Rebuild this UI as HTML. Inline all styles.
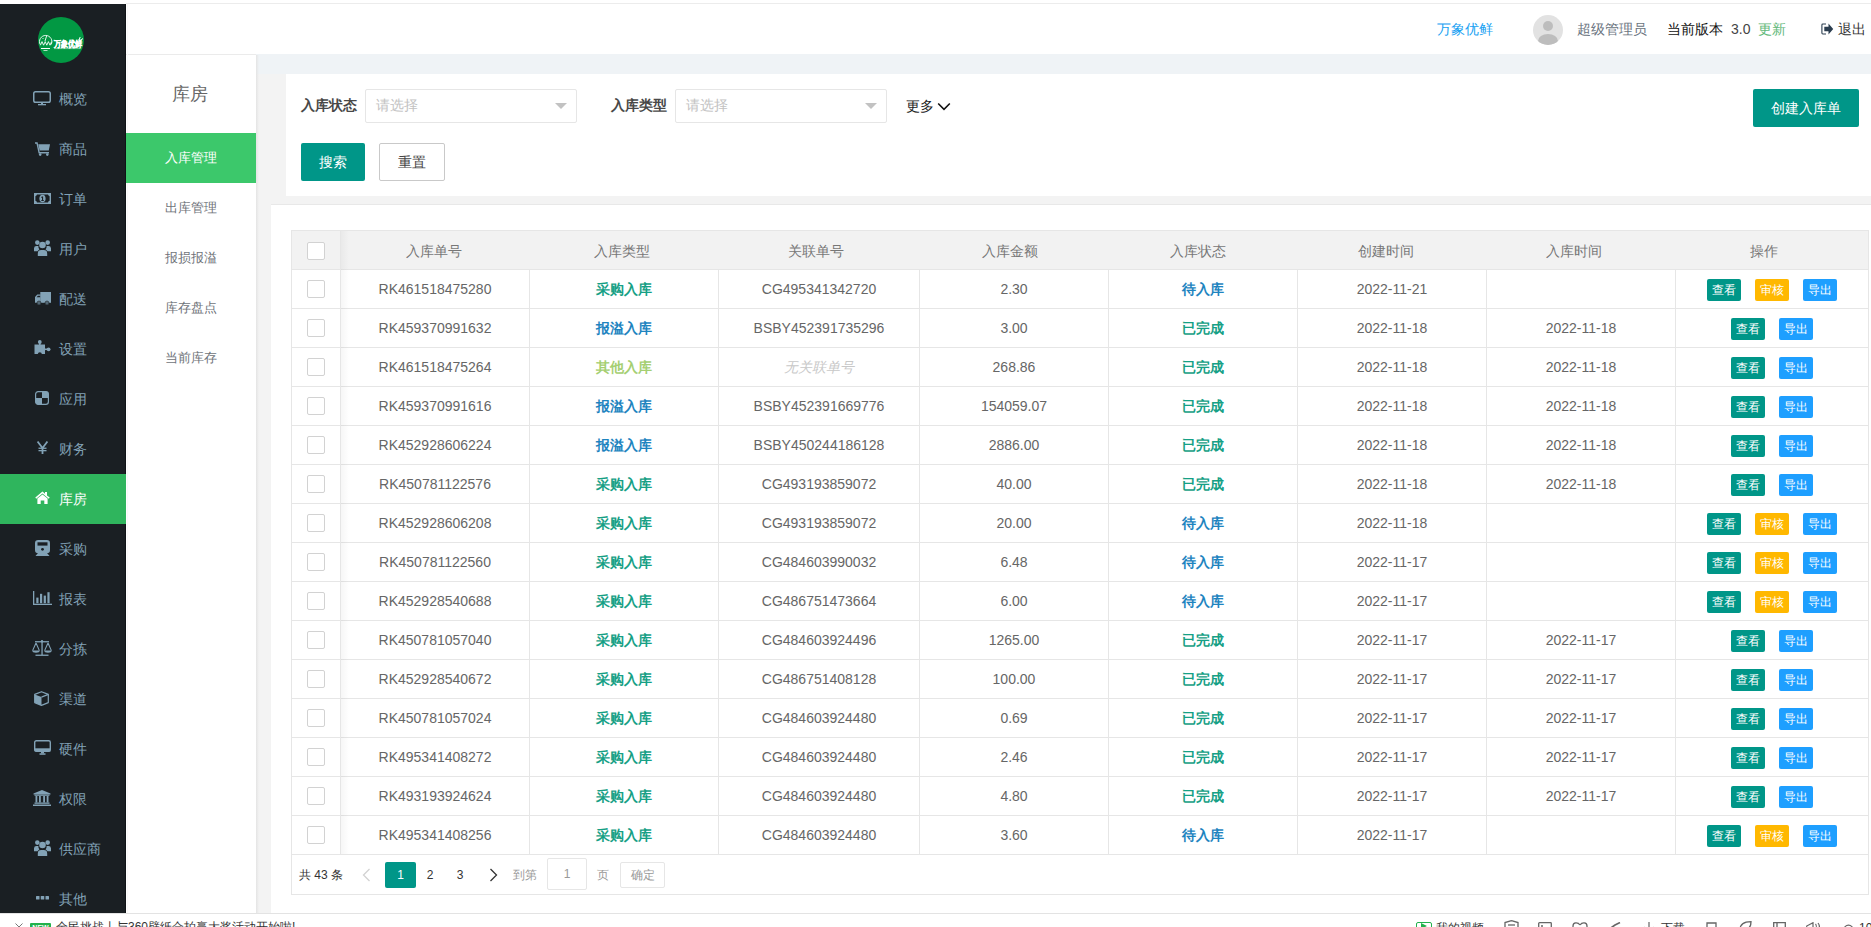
<!DOCTYPE html>
<html><head><meta charset="utf-8">
<style>
*{box-sizing:border-box;margin:0;padding:0}
html,body{width:1871px;height:927px;overflow:hidden;background:#fff;font-family:"Liberation Sans",sans-serif;font-size:14px;color:#666}
.a{position:absolute}
.c{position:absolute;display:flex;align-items:center;justify-content:center;white-space:nowrap}
.hl{position:absolute;height:1px;background:#e6e6e6}
.vl{position:absolute;width:1px;background:#e6e6e6}
.mi{position:absolute;left:0;width:126px;height:50px;color:#7f99aa;font-size:14px}
.mi .ic{position:absolute;left:42px;top:25px;transform:translate(-50%,-50%);display:flex;align-items:center;justify-content:center;line-height:1}
.mi .tx{position:absolute;left:59px;top:0;line-height:50px}
.sm{position:absolute;left:126px;width:130px;height:50px;line-height:50px;text-align:center;font-size:13px;color:#6f747a}
.cb{position:absolute;width:18px;height:18px;border:1px solid #d2d2d2;border-radius:2px;background:#fff}
.btn{position:absolute;height:22px;width:34px;line-height:22px;font-size:12px;color:#fff;text-align:center;border-radius:2px}
</style></head><body>

<div class="a" style="left:126px;top:3px;width:1745px;height:1px;background:#ececec"></div>
<div class="a" style="left:0;top:4px;width:126px;height:909px;background:#1a1f23"></div>
<div class="a" style="left:125px;top:4px;width:1px;height:909px;background:#0f1316"></div>
<div class="a" style="left:38px;top:17px;width:46px;height:46px;border-radius:50%;background:#029843;overflow:hidden">
<svg width="46" height="46" viewBox="0 0 46 46" style="position:absolute;left:0;top:0">
<path d="M2.2 27.5 A6.2 6.2 0 1 1 13.2 27.5" fill="none" stroke="#fff" stroke-width="0.9"/>
<path d="M2.4 28.2 l1.6-3.6 1.6 3.6 1.6-3.6 1.6 3.6 1.6-3.6 1.6 3.6 1.6-3.6" fill="none" stroke="#fff" stroke-width="0.9"/>
<path d="M8.6 19 l-1.6 5" stroke="#fff" stroke-width="0.9"/>
<rect x="4.4" y="21.3" width="1.2" height="0.7" fill="#fff"/>
<rect x="3" y="31" width="9" height="1" fill="#fff"/><rect x="5.5" y="33.2" width="4" height="0.7" fill="#fff"/>
<text x="16" y="29.5" font-size="8.5" font-weight="bold" fill="#fff" stroke="#fff" stroke-width="0.35" font-family="Liberation Sans, sans-serif" textLength="28" lengthAdjust="spacingAndGlyphs">万象优鲜</text>
<path d="M41 23 l1.2-3 M42.5 23.5 l2.5-2" stroke="#fff" stroke-width="1"/>
<rect x="16" y="31.2" width="26" height="0.9" fill="#fff" opacity="0.5"/>
</svg></div>
<div class="a" style="left:59px;top:74px;line-height:50px;font-size:14px;color:#82a2b6">概览</div>
<svg class="a" style="left:33px;top:91px" width="18" height="15" viewBox="0 0 18 15"><rect x="0.75" y="0.75" width="16.5" height="10.5" rx="1.8" fill="none" stroke="#82a2b6" stroke-width="1.5"/><rect x="8" y="11.5" width="2" height="2" fill="#82a2b6"/><rect x="5" y="13" width="8" height="1.3" fill="#82a2b6"/></svg>
<div class="a" style="left:59px;top:124px;line-height:50px;font-size:14px;color:#82a2b6">商品</div>
<svg class="a" style="left:35px;top:142px" width="15" height="14" viewBox="0 0 15 14"><path d="M0 0.3h2.6l2.1 9.8h9.3v1.4H3.6L1.5 1.7H0z" fill="#82a2b6"/><path d="M3.3 2.3H15l-1.2 6.3H4.6z" fill="#82a2b6"/><circle cx="5.2" cy="12.6" r="1.3" fill="#82a2b6"/><circle cx="12.3" cy="12.6" r="1.3" fill="#82a2b6"/></svg>
<div class="a" style="left:59px;top:174px;line-height:50px;font-size:14px;color:#82a2b6">订单</div>
<svg class="a" style="left:34px;top:193px" width="17" height="11" viewBox="0 0 17 11"><rect x="0" y="0" width="17" height="11" fill="#82a2b6"/><path d="M3 1.6h11a2 2 0 0 0 1.6 1.6v4.6a2 2 0 0 0-1.6 1.6H3a2 2 0 0 0-1.6-1.6V3.2A2 2 0 0 0 3 1.6z" fill="#1a1f23"/><ellipse cx="8.5" cy="5.5" rx="3.1" ry="3.8" fill="#82a2b6"/><path d="M8 3.4h1.1v3.9h0.9v0.8H7.1V7.3h0.9V4.5l-0.8 0.4V4z" fill="#1a1f23"/></svg>
<div class="a" style="left:59px;top:224px;line-height:50px;font-size:14px;color:#82a2b6">用户</div>
<svg class="a" style="left:34px;top:240px" width="17" height="16" viewBox="0 0 17 16"><circle cx="3.3" cy="2.6" r="2.3" fill="#82a2b6"/><circle cx="13.7" cy="2.6" r="2.3" fill="#82a2b6"/><circle cx="8.5" cy="5" r="3.3" fill="#82a2b6"/><path d="M0 8.2a2.4 2.4 0 0 1 2.4-2.2h2a4.2 4.2 0 0 0 1 3.4 4 4 0 0 0-1.9 1.8H0z" fill="#82a2b6"/><path d="M17 8.2a2.4 2.4 0 0 0-2.4-2.2h-2a4.2 4.2 0 0 1-1 3.4 4 4 0 0 1 1.9 1.8H17z" fill="#82a2b6"/><path d="M3.8 16v-2.6a3.4 3.4 0 0 1 3.4-3.3h2.6a3.4 3.4 0 0 1 3.4 3.3V16z" fill="#82a2b6"/></svg>
<div class="a" style="left:59px;top:274px;line-height:50px;font-size:14px;color:#82a2b6">配送</div>
<svg class="a" style="left:35px;top:292px" width="16" height="13" viewBox="0 0 16 13"><rect x="5.3" y="0" width="10.7" height="10.8" fill="#82a2b6"/><path d="M0 10.8V5l2.3-2.6h3.3v8.4z" fill="#82a2b6"/><path d="M1.6 5.2l1.3-1.4h2.2v1.4z" fill="#1a1f23"/><circle cx="4" cy="11" r="1.9" fill="#82a2b6" stroke="#1a1f23" stroke-width="0.8"/><circle cx="12" cy="11" r="1.9" fill="#82a2b6" stroke="#1a1f23" stroke-width="0.8"/><circle cx="4" cy="11" r="0.8" fill="#1a1f23"/><circle cx="12" cy="11" r="0.8" fill="#1a1f23"/></svg>
<div class="a" style="left:59px;top:324px;line-height:50px;font-size:14px;color:#82a2b6">设置</div>
<svg class="a" style="left:34px;top:340px" width="17" height="14" viewBox="0 0 17 14"><rect x="0.5" y="4.5" width="10.5" height="9.5" fill="#82a2b6"/><circle cx="5.8" cy="2" r="1.9" fill="#82a2b6"/><rect x="5" y="2.5" width="1.6" height="2.5" fill="#82a2b6"/><circle cx="14.6" cy="9.3" r="1.9" fill="#82a2b6"/><rect x="10.5" y="8.5" width="3" height="1.6" fill="#82a2b6"/><circle cx="5.8" cy="14.2" r="2" fill="#1a1f23"/></svg>
<div class="a" style="left:59px;top:374px;line-height:50px;font-size:14px;color:#82a2b6">应用</div>
<svg class="a" style="left:35px;top:391px" width="14" height="14" viewBox="0 0 14 14"><rect x="0.6" y="0.6" width="12.8" height="12.8" rx="2.6" fill="none" stroke="#82a2b6" stroke-width="1.2"/><path d="M7 0.6h4a2.4 2.4 0 0 1 2.4 2.4V7H7z" fill="#82a2b6"/><path d="M7 13.4H3A2.4 2.4 0 0 1 0.6 11V7H7z" fill="#82a2b6"/></svg>
<div class="a" style="left:59px;top:424px;line-height:50px;font-size:14px;color:#82a2b6">财务</div>
<svg class="a" style="left:37px;top:441px" width="11" height="13" viewBox="0 0 11 13"><path d="M0.5 0.5L5.5 7 10.5 0.5" fill="none" stroke="#82a2b6" stroke-width="1.8"/><rect x="4.6" y="6" width="1.8" height="7" fill="#82a2b6"/><rect x="1.5" y="6.6" width="8" height="1.3" fill="#82a2b6"/><rect x="1.5" y="9" width="8" height="1.3" fill="#82a2b6"/></svg>
<div class="a" style="left:0;top:474px;width:126px;height:50px;background:#2fb55d"></div>
<div class="a" style="left:59px;top:474px;line-height:50px;font-size:14px;color:#fff">库房</div>
<svg class="a" style="left:35px;top:491px" width="15" height="13" viewBox="0 0 15 13"><path d="M7.5 0.6L0.3 6.6l0.9 1.1L7.5 2.4l6.3 5.3 0.9-1.1L12 4.4V1H10v1.7z" fill="#fff"/><path d="M2.4 7.6L7.5 3.4l5.1 4.2V13H9.3V9.4H5.7V13H2.4z" fill="#fff"/></svg>
<div class="a" style="left:59px;top:524px;line-height:50px;font-size:14px;color:#82a2b6">采购</div>
<svg class="a" style="left:35px;top:540px" width="15" height="16" viewBox="0 0 15 16"><rect x="0" y="0" width="15" height="13.2" rx="3.2" fill="#82a2b6"/><rect x="2.5" y="2.3" width="10" height="3.3" fill="#1a1f23"/><circle cx="7.5" cy="9.3" r="1.4" fill="#1a1f23"/><path d="M3 13h9l2.5 3H0.5z" fill="#82a2b6"/></svg>
<div class="a" style="left:59px;top:574px;line-height:50px;font-size:14px;color:#82a2b6">报表</div>
<svg class="a" style="left:33px;top:591px" width="19" height="14" viewBox="0 0 19 14"><rect x="0" y="0" width="1.3" height="14" fill="#82a2b6"/><rect x="0" y="12.7" width="19" height="1.3" fill="#82a2b6"/><rect x="3.3" y="6.6" width="2.2" height="5.6" fill="#82a2b6"/><rect x="7" y="2.8" width="2.2" height="9.4" fill="#82a2b6"/><rect x="10.7" y="4.6" width="2.2" height="7.6" fill="#82a2b6"/><rect x="14.4" y="1.2" width="2.2" height="11" fill="#82a2b6"/></svg>
<div class="a" style="left:59px;top:624px;line-height:50px;font-size:14px;color:#82a2b6">分拣</div>
<svg class="a" style="left:32px;top:640px" width="20" height="16" viewBox="0 0 20 16"><rect x="3" y="1.1" width="14" height="1.3" fill="#82a2b6"/><circle cx="10" cy="1.3" r="1.2" fill="#82a2b6"/><rect x="9.4" y="1" width="1.3" height="14" fill="#82a2b6"/><rect x="3.5" y="14.6" width="13" height="1.3" fill="#82a2b6"/><path d="M4 3L0.6 10.6M4 3l3.4 7.6M16 3l-3.4 7.6M16 3l3.4 7.6" stroke="#82a2b6" stroke-width="1.1" fill="none"/><path d="M0.3 10.6h7.4a3.7 2.2 0 0 1-7.4 0zM12.3 10.6h7.4a3.7 2.2 0 0 1-7.4 0z" fill="#82a2b6"/></svg>
<div class="a" style="left:59px;top:674px;line-height:50px;font-size:14px;color:#82a2b6">渠道</div>
<svg class="a" style="left:34px;top:691px" width="15" height="15" viewBox="0 0 15 15"><path d="M7.5 0.7l6.8 2.7v8.2l-6.8 2.8-6.8-2.8V3.4z" fill="none" stroke="#82a2b6" stroke-width="1.2" stroke-linejoin="round"/><path d="M0.7 3.4L7.5 6.1v8.3L0.7 11.6z" fill="#82a2b6"/><path d="M7.5 6.1l6.8-2.7" stroke="#82a2b6" stroke-width="1.2"/></svg>
<div class="a" style="left:59px;top:724px;line-height:50px;font-size:14px;color:#82a2b6">硬件</div>
<svg class="a" style="left:34px;top:740px" width="17" height="15" viewBox="0 0 17 15"><rect x="0.7" y="0.7" width="15.6" height="10.6" rx="1.6" fill="none" stroke="#82a2b6" stroke-width="1.4"/><rect x="0.7" y="8.3" width="15.6" height="3.2" fill="#82a2b6"/><rect x="7" y="11.5" width="3" height="2" fill="#82a2b6"/><rect x="5.5" y="13.3" width="6" height="1.5" fill="#82a2b6"/></svg>
<div class="a" style="left:59px;top:774px;line-height:50px;font-size:14px;color:#82a2b6">权限</div>
<svg class="a" style="left:33px;top:790px" width="18" height="16" viewBox="0 0 18 16"><path d="M9 0L17.5 3.6V4.6H0.5V3.6z" fill="#82a2b6"/><rect x="1.5" y="4.6" width="15" height="1.2" fill="#82a2b6"/><rect x="2.5" y="6" width="1.8" height="6.5" fill="#82a2b6"/><rect x="6" y="6" width="1.8" height="6.5" fill="#82a2b6"/><rect x="10.2" y="6" width="1.8" height="6.5" fill="#82a2b6"/><rect x="13.7" y="6" width="1.8" height="6.5" fill="#82a2b6"/><rect x="1.5" y="12.5" width="15" height="1.3" fill="#82a2b6"/><rect x="0" y="14.5" width="18" height="1.5" fill="#82a2b6"/></svg>
<div class="a" style="left:59px;top:824px;line-height:50px;font-size:14px;color:#82a2b6">供应商</div>
<svg class="a" style="left:34px;top:840px" width="17" height="16" viewBox="0 0 17 16"><circle cx="3.3" cy="2.6" r="2.3" fill="#82a2b6"/><circle cx="13.7" cy="2.6" r="2.3" fill="#82a2b6"/><circle cx="8.5" cy="5" r="3.3" fill="#82a2b6"/><path d="M0 8.2a2.4 2.4 0 0 1 2.4-2.2h2a4.2 4.2 0 0 0 1 3.4 4 4 0 0 0-1.9 1.8H0z" fill="#82a2b6"/><path d="M17 8.2a2.4 2.4 0 0 0-2.4-2.2h-2a4.2 4.2 0 0 1-1 3.4 4 4 0 0 1 1.9 1.8H17z" fill="#82a2b6"/><path d="M3.8 16v-2.6a3.4 3.4 0 0 1 3.4-3.3h2.6a3.4 3.4 0 0 1 3.4 3.3V16z" fill="#82a2b6"/></svg>
<div class="a" style="left:59px;top:874px;line-height:50px;font-size:14px;color:#82a2b6">其他</div>
<svg class="a" style="left:36px;top:896px" width="13" height="4" viewBox="0 0 13 4"><rect x="0" y="0" width="3.5" height="3.6" rx="0.5" fill="#82a2b6"/><rect x="4.75" y="0" width="3.5" height="3.6" rx="0.5" fill="#82a2b6"/><rect x="9.5" y="0" width="3.5" height="3.6" rx="0.5" fill="#82a2b6"/></svg>
<div class="a" style="left:126px;top:54px;width:130px;height:1px;background:#ebebeb"></div>
<div class="a" style="left:127px;top:4px;width:1px;height:909px;background:#f9f9f9"></div>
<div class="a" style="left:1437px;top:19px;line-height:20px;font-size:14px;color:#14a0f2">万象优鲜</div>
<div class="a" style="left:1533px;top:15px;width:30px;height:30px;border-radius:50%;background:#e2e2e2;overflow:hidden">
<div class="a" style="left:10px;top:6px;width:10px;height:10px;border-radius:50%;background:#bdbdbd"></div>
<div class="a" style="left:5px;top:19px;width:20px;height:14px;border-radius:50%;background:#bdbdbd"></div></div>
<div class="a" style="left:1577px;top:19px;line-height:20px;font-size:14px;color:#6a7480">超级管理员</div>
<div class="a" style="left:1667px;top:19px;line-height:20px;font-size:14px;color:#111">当前版本</div>
<div class="a" style="left:1731px;top:19px;line-height:20px;font-size:14px;color:#444">3.0</div>
<div class="a" style="left:1758px;top:19px;line-height:20px;font-size:14px;color:#5fb878">更新</div>
<svg class="a" style="left:1821px;top:23px" width="13" height="12" viewBox="0 0 13 12"><path d="M5 1H1.8A0.9 0.9 0 0 0 0.9 1.9v8.2a0.9 0.9 0 0 0 0.9 0.9H5" fill="none" stroke="#2c3e50" stroke-width="1.1"/><path d="M3.3 3.8h4.2V0.6L12.2 6 7.5 11.4V8.2H3.3z" fill="#2c3e50"/></svg>
<div class="a" style="left:1838px;top:19px;line-height:20px;font-size:14px;color:#333">退出</div>
<div class="a" style="left:172px;top:83px;line-height:22px;font-size:18px;color:#666">库房</div>
<div class="sm" style="top:133px;background:#3cc86b;color:#fff;">入库管理</div>
<div class="sm" style="top:183px;">出库管理</div>
<div class="sm" style="top:233px;">报损报溢</div>
<div class="sm" style="top:283px;">库存盘点</div>
<div class="sm" style="top:333px;">当前库存</div>
<div class="a" style="left:256px;top:54px;width:1615px;height:20px;background:#eff3f6"></div>
<div class="a" style="left:256px;top:74px;width:1615px;height:839px;background:#f3f3f3"></div>
<div class="a" style="left:256px;top:55px;width:3px;height:858px;background:linear-gradient(to right,#e4e4e4,rgba(243,243,243,0))"></div>
<div class="a" style="left:286px;top:74px;width:1585px;height:122px;background:#fff"></div>
<div class="a" style="left:301px;top:95px;line-height:20px;font-size:14px;font-weight:bold;color:#484848">入库状态</div>
<div class="a" style="left:611px;top:95px;line-height:20px;font-size:14px;font-weight:bold;color:#484848">入库类型</div>
<div class="a" style="left:365px;top:89px;width:212px;height:34px;border:1px solid #e6e6e6;border-radius:2px;background:#fff"></div>
<div class="a" style="left:376px;top:95px;line-height:20px;font-size:14px;color:#c2c2c2">请选择</div>
<div class="a" style="left:555px;top:103px;width:0;height:0;border-left:6px solid transparent;border-right:6px solid transparent;border-top:6px solid #c2c2c2"></div>
<div class="a" style="left:675px;top:89px;width:212px;height:34px;border:1px solid #e6e6e6;border-radius:2px;background:#fff"></div>
<div class="a" style="left:686px;top:95px;line-height:20px;font-size:14px;color:#c2c2c2">请选择</div>
<div class="a" style="left:865px;top:103px;width:0;height:0;border-left:6px solid transparent;border-right:6px solid transparent;border-top:6px solid #c2c2c2"></div>
<div class="a" style="left:906px;top:96px;line-height:20px;font-size:14px;color:#222">更多</div>
<svg class="a" style="left:937px;top:102px" width="14" height="9" viewBox="0 0 14 9"><path d="M1.2 1.5l5.8 5.8 5.8-5.8" fill="none" stroke="#111" stroke-width="1.6"/></svg>
<div class="a" style="left:301px;top:143px;width:64px;height:38px;line-height:38px;background:#009688;color:#fff;text-align:center;border-radius:2px">搜索</div>
<div class="a" style="left:379px;top:143px;width:66px;height:38px;line-height:36px;border:1px solid #c9c9c9;background:#fff;color:#444;text-align:center;border-radius:2px">重置</div>
<div class="a" style="left:1753px;top:89px;width:106px;height:38px;line-height:38px;background:#009688;color:#fff;text-align:center;border-radius:2px">创建入库单</div>
<div class="a" style="left:271px;top:204px;width:1600px;height:709px;background:#fff;border-top:1px solid #e8e8e8"></div>
<div class="a" style="left:291px;top:230px;width:1578px;height:40px;background:#f2f2f2"></div>
<div class="hl" style="left:291px;top:230px;width:1578px"></div>
<div class="hl" style="left:291px;top:269px;width:1578px"></div>
<div class="hl" style="left:291px;top:308px;width:1578px"></div>
<div class="hl" style="left:291px;top:347px;width:1578px"></div>
<div class="hl" style="left:291px;top:386px;width:1578px"></div>
<div class="hl" style="left:291px;top:425px;width:1578px"></div>
<div class="hl" style="left:291px;top:464px;width:1578px"></div>
<div class="hl" style="left:291px;top:503px;width:1578px"></div>
<div class="hl" style="left:291px;top:542px;width:1578px"></div>
<div class="hl" style="left:291px;top:581px;width:1578px"></div>
<div class="hl" style="left:291px;top:620px;width:1578px"></div>
<div class="hl" style="left:291px;top:659px;width:1578px"></div>
<div class="hl" style="left:291px;top:698px;width:1578px"></div>
<div class="hl" style="left:291px;top:737px;width:1578px"></div>
<div class="hl" style="left:291px;top:776px;width:1578px"></div>
<div class="hl" style="left:291px;top:815px;width:1578px"></div>
<div class="hl" style="left:291px;top:854px;width:1578px"></div>
<div class="hl" style="left:291px;top:894px;width:1578px"></div>
<div class="vl" style="left:291px;top:230px;height:665px"></div>
<div class="vl" style="left:1868px;top:230px;height:665px"></div>
<div class="vl" style="left:340px;top:230px;height:624px"></div>
<div class="a" style="left:341px;top:231px;width:8px;height:623px;background:linear-gradient(to right,rgba(0,0,0,0.035),rgba(0,0,0,0))"></div>
<div class="vl" style="left:529px;top:270px;height:584px"></div>
<div class="vl" style="left:718px;top:270px;height:584px"></div>
<div class="vl" style="left:919px;top:270px;height:584px"></div>
<div class="vl" style="left:1108px;top:270px;height:584px"></div>
<div class="vl" style="left:1297px;top:270px;height:584px"></div>
<div class="vl" style="left:1486px;top:270px;height:584px"></div>
<div class="vl" style="left:1675px;top:270px;height:584px"></div>
<div class="c" style="left:374px;top:233px;width:120px;height:38px;color:#777">入库单号</div>
<div class="c" style="left:562px;top:233px;width:120px;height:38px;color:#777">入库类型</div>
<div class="c" style="left:756px;top:233px;width:120px;height:38px;color:#777">关联单号</div>
<div class="c" style="left:950px;top:233px;width:120px;height:38px;color:#777">入库金额</div>
<div class="c" style="left:1138px;top:233px;width:120px;height:38px;color:#777">入库状态</div>
<div class="c" style="left:1326px;top:233px;width:120px;height:38px;color:#777">创建时间</div>
<div class="c" style="left:1514px;top:233px;width:120px;height:38px;color:#777">入库时间</div>
<div class="c" style="left:1704px;top:233px;width:120px;height:38px;color:#777">操作</div>
<div class="cb" style="left:307px;top:242px"></div>
<div class="cb" style="left:307px;top:280px"></div>
<div class="c" style="left:341px;top:270px;width:188px;height:38px;">RK461518475280</div>
<div class="c" style="left:530px;top:271px;width:188px;height:38px;color:#16a085;font-weight:bold">采购入库</div>
<div class="c" style="left:719px;top:270px;width:200px;height:38px;">CG495341342720</div>
<div class="c" style="left:920px;top:270px;width:188px;height:38px;">2.30</div>
<div class="c" style="left:1109px;top:271px;width:188px;height:38px;color:#1e84bf;font-weight:bold">待入库</div>
<div class="c" style="left:1298px;top:270px;width:188px;height:38px;">2022-11-21</div>
<div class="btn" style="left:1707px;top:279px;background:#009688">查看</div>
<div class="btn" style="left:1755px;top:279px;background:#ffb800">审核</div>
<div class="btn" style="left:1803px;top:279px;background:#1e9fff">导出</div>
<div class="cb" style="left:307px;top:319px"></div>
<div class="c" style="left:341px;top:309px;width:188px;height:38px;">RK459370991632</div>
<div class="c" style="left:530px;top:310px;width:188px;height:38px;color:#1e84bf;font-weight:bold">报溢入库</div>
<div class="c" style="left:719px;top:309px;width:200px;height:38px;">BSBY452391735296</div>
<div class="c" style="left:920px;top:309px;width:188px;height:38px;">3.00</div>
<div class="c" style="left:1109px;top:310px;width:188px;height:38px;color:#16a085;font-weight:bold">已完成</div>
<div class="c" style="left:1298px;top:309px;width:188px;height:38px;">2022-11-18</div>
<div class="c" style="left:1487px;top:309px;width:188px;height:38px;">2022-11-18</div>
<div class="btn" style="left:1731px;top:318px;background:#009688">查看</div>
<div class="btn" style="left:1779px;top:318px;background:#1e9fff">导出</div>
<div class="cb" style="left:307px;top:358px"></div>
<div class="c" style="left:341px;top:348px;width:188px;height:38px;">RK461518475264</div>
<div class="c" style="left:530px;top:349px;width:188px;height:38px;color:#a5cf72;font-weight:bold">其他入库</div>
<div class="c" style="left:719px;top:349px;width:200px;height:38px;color:#c8c8c8;font-style:italic">无关联单号</div>
<div class="c" style="left:920px;top:348px;width:188px;height:38px;">268.86</div>
<div class="c" style="left:1109px;top:349px;width:188px;height:38px;color:#16a085;font-weight:bold">已完成</div>
<div class="c" style="left:1298px;top:348px;width:188px;height:38px;">2022-11-18</div>
<div class="c" style="left:1487px;top:348px;width:188px;height:38px;">2022-11-18</div>
<div class="btn" style="left:1731px;top:357px;background:#009688">查看</div>
<div class="btn" style="left:1779px;top:357px;background:#1e9fff">导出</div>
<div class="cb" style="left:307px;top:397px"></div>
<div class="c" style="left:341px;top:387px;width:188px;height:38px;">RK459370991616</div>
<div class="c" style="left:530px;top:388px;width:188px;height:38px;color:#1e84bf;font-weight:bold">报溢入库</div>
<div class="c" style="left:719px;top:387px;width:200px;height:38px;">BSBY452391669776</div>
<div class="c" style="left:920px;top:387px;width:188px;height:38px;">154059.07</div>
<div class="c" style="left:1109px;top:388px;width:188px;height:38px;color:#16a085;font-weight:bold">已完成</div>
<div class="c" style="left:1298px;top:387px;width:188px;height:38px;">2022-11-18</div>
<div class="c" style="left:1487px;top:387px;width:188px;height:38px;">2022-11-18</div>
<div class="btn" style="left:1731px;top:396px;background:#009688">查看</div>
<div class="btn" style="left:1779px;top:396px;background:#1e9fff">导出</div>
<div class="cb" style="left:307px;top:436px"></div>
<div class="c" style="left:341px;top:426px;width:188px;height:38px;">RK452928606224</div>
<div class="c" style="left:530px;top:427px;width:188px;height:38px;color:#1e84bf;font-weight:bold">报溢入库</div>
<div class="c" style="left:719px;top:426px;width:200px;height:38px;">BSBY450244186128</div>
<div class="c" style="left:920px;top:426px;width:188px;height:38px;">2886.00</div>
<div class="c" style="left:1109px;top:427px;width:188px;height:38px;color:#16a085;font-weight:bold">已完成</div>
<div class="c" style="left:1298px;top:426px;width:188px;height:38px;">2022-11-18</div>
<div class="c" style="left:1487px;top:426px;width:188px;height:38px;">2022-11-18</div>
<div class="btn" style="left:1731px;top:435px;background:#009688">查看</div>
<div class="btn" style="left:1779px;top:435px;background:#1e9fff">导出</div>
<div class="cb" style="left:307px;top:475px"></div>
<div class="c" style="left:341px;top:465px;width:188px;height:38px;">RK450781122576</div>
<div class="c" style="left:530px;top:466px;width:188px;height:38px;color:#16a085;font-weight:bold">采购入库</div>
<div class="c" style="left:719px;top:465px;width:200px;height:38px;">CG493193859072</div>
<div class="c" style="left:920px;top:465px;width:188px;height:38px;">40.00</div>
<div class="c" style="left:1109px;top:466px;width:188px;height:38px;color:#16a085;font-weight:bold">已完成</div>
<div class="c" style="left:1298px;top:465px;width:188px;height:38px;">2022-11-18</div>
<div class="c" style="left:1487px;top:465px;width:188px;height:38px;">2022-11-18</div>
<div class="btn" style="left:1731px;top:474px;background:#009688">查看</div>
<div class="btn" style="left:1779px;top:474px;background:#1e9fff">导出</div>
<div class="cb" style="left:307px;top:514px"></div>
<div class="c" style="left:341px;top:504px;width:188px;height:38px;">RK452928606208</div>
<div class="c" style="left:530px;top:505px;width:188px;height:38px;color:#16a085;font-weight:bold">采购入库</div>
<div class="c" style="left:719px;top:504px;width:200px;height:38px;">CG493193859072</div>
<div class="c" style="left:920px;top:504px;width:188px;height:38px;">20.00</div>
<div class="c" style="left:1109px;top:505px;width:188px;height:38px;color:#1e84bf;font-weight:bold">待入库</div>
<div class="c" style="left:1298px;top:504px;width:188px;height:38px;">2022-11-18</div>
<div class="btn" style="left:1707px;top:513px;background:#009688">查看</div>
<div class="btn" style="left:1755px;top:513px;background:#ffb800">审核</div>
<div class="btn" style="left:1803px;top:513px;background:#1e9fff">导出</div>
<div class="cb" style="left:307px;top:553px"></div>
<div class="c" style="left:341px;top:543px;width:188px;height:38px;">RK450781122560</div>
<div class="c" style="left:530px;top:544px;width:188px;height:38px;color:#16a085;font-weight:bold">采购入库</div>
<div class="c" style="left:719px;top:543px;width:200px;height:38px;">CG484603990032</div>
<div class="c" style="left:920px;top:543px;width:188px;height:38px;">6.48</div>
<div class="c" style="left:1109px;top:544px;width:188px;height:38px;color:#1e84bf;font-weight:bold">待入库</div>
<div class="c" style="left:1298px;top:543px;width:188px;height:38px;">2022-11-17</div>
<div class="btn" style="left:1707px;top:552px;background:#009688">查看</div>
<div class="btn" style="left:1755px;top:552px;background:#ffb800">审核</div>
<div class="btn" style="left:1803px;top:552px;background:#1e9fff">导出</div>
<div class="cb" style="left:307px;top:592px"></div>
<div class="c" style="left:341px;top:582px;width:188px;height:38px;">RK452928540688</div>
<div class="c" style="left:530px;top:583px;width:188px;height:38px;color:#16a085;font-weight:bold">采购入库</div>
<div class="c" style="left:719px;top:582px;width:200px;height:38px;">CG486751473664</div>
<div class="c" style="left:920px;top:582px;width:188px;height:38px;">6.00</div>
<div class="c" style="left:1109px;top:583px;width:188px;height:38px;color:#1e84bf;font-weight:bold">待入库</div>
<div class="c" style="left:1298px;top:582px;width:188px;height:38px;">2022-11-17</div>
<div class="btn" style="left:1707px;top:591px;background:#009688">查看</div>
<div class="btn" style="left:1755px;top:591px;background:#ffb800">审核</div>
<div class="btn" style="left:1803px;top:591px;background:#1e9fff">导出</div>
<div class="cb" style="left:307px;top:631px"></div>
<div class="c" style="left:341px;top:621px;width:188px;height:38px;">RK450781057040</div>
<div class="c" style="left:530px;top:622px;width:188px;height:38px;color:#16a085;font-weight:bold">采购入库</div>
<div class="c" style="left:719px;top:621px;width:200px;height:38px;">CG484603924496</div>
<div class="c" style="left:920px;top:621px;width:188px;height:38px;">1265.00</div>
<div class="c" style="left:1109px;top:622px;width:188px;height:38px;color:#16a085;font-weight:bold">已完成</div>
<div class="c" style="left:1298px;top:621px;width:188px;height:38px;">2022-11-17</div>
<div class="c" style="left:1487px;top:621px;width:188px;height:38px;">2022-11-17</div>
<div class="btn" style="left:1731px;top:630px;background:#009688">查看</div>
<div class="btn" style="left:1779px;top:630px;background:#1e9fff">导出</div>
<div class="cb" style="left:307px;top:670px"></div>
<div class="c" style="left:341px;top:660px;width:188px;height:38px;">RK452928540672</div>
<div class="c" style="left:530px;top:661px;width:188px;height:38px;color:#16a085;font-weight:bold">采购入库</div>
<div class="c" style="left:719px;top:660px;width:200px;height:38px;">CG486751408128</div>
<div class="c" style="left:920px;top:660px;width:188px;height:38px;">100.00</div>
<div class="c" style="left:1109px;top:661px;width:188px;height:38px;color:#16a085;font-weight:bold">已完成</div>
<div class="c" style="left:1298px;top:660px;width:188px;height:38px;">2022-11-17</div>
<div class="c" style="left:1487px;top:660px;width:188px;height:38px;">2022-11-17</div>
<div class="btn" style="left:1731px;top:669px;background:#009688">查看</div>
<div class="btn" style="left:1779px;top:669px;background:#1e9fff">导出</div>
<div class="cb" style="left:307px;top:709px"></div>
<div class="c" style="left:341px;top:699px;width:188px;height:38px;">RK450781057024</div>
<div class="c" style="left:530px;top:700px;width:188px;height:38px;color:#16a085;font-weight:bold">采购入库</div>
<div class="c" style="left:719px;top:699px;width:200px;height:38px;">CG484603924480</div>
<div class="c" style="left:920px;top:699px;width:188px;height:38px;">0.69</div>
<div class="c" style="left:1109px;top:700px;width:188px;height:38px;color:#16a085;font-weight:bold">已完成</div>
<div class="c" style="left:1298px;top:699px;width:188px;height:38px;">2022-11-17</div>
<div class="c" style="left:1487px;top:699px;width:188px;height:38px;">2022-11-17</div>
<div class="btn" style="left:1731px;top:708px;background:#009688">查看</div>
<div class="btn" style="left:1779px;top:708px;background:#1e9fff">导出</div>
<div class="cb" style="left:307px;top:748px"></div>
<div class="c" style="left:341px;top:738px;width:188px;height:38px;">RK495341408272</div>
<div class="c" style="left:530px;top:739px;width:188px;height:38px;color:#16a085;font-weight:bold">采购入库</div>
<div class="c" style="left:719px;top:738px;width:200px;height:38px;">CG484603924480</div>
<div class="c" style="left:920px;top:738px;width:188px;height:38px;">2.46</div>
<div class="c" style="left:1109px;top:739px;width:188px;height:38px;color:#16a085;font-weight:bold">已完成</div>
<div class="c" style="left:1298px;top:738px;width:188px;height:38px;">2022-11-17</div>
<div class="c" style="left:1487px;top:738px;width:188px;height:38px;">2022-11-17</div>
<div class="btn" style="left:1731px;top:747px;background:#009688">查看</div>
<div class="btn" style="left:1779px;top:747px;background:#1e9fff">导出</div>
<div class="cb" style="left:307px;top:787px"></div>
<div class="c" style="left:341px;top:777px;width:188px;height:38px;">RK493193924624</div>
<div class="c" style="left:530px;top:778px;width:188px;height:38px;color:#16a085;font-weight:bold">采购入库</div>
<div class="c" style="left:719px;top:777px;width:200px;height:38px;">CG484603924480</div>
<div class="c" style="left:920px;top:777px;width:188px;height:38px;">4.80</div>
<div class="c" style="left:1109px;top:778px;width:188px;height:38px;color:#16a085;font-weight:bold">已完成</div>
<div class="c" style="left:1298px;top:777px;width:188px;height:38px;">2022-11-17</div>
<div class="c" style="left:1487px;top:777px;width:188px;height:38px;">2022-11-17</div>
<div class="btn" style="left:1731px;top:786px;background:#009688">查看</div>
<div class="btn" style="left:1779px;top:786px;background:#1e9fff">导出</div>
<div class="cb" style="left:307px;top:826px"></div>
<div class="c" style="left:341px;top:816px;width:188px;height:38px;">RK495341408256</div>
<div class="c" style="left:530px;top:817px;width:188px;height:38px;color:#16a085;font-weight:bold">采购入库</div>
<div class="c" style="left:719px;top:816px;width:200px;height:38px;">CG484603924480</div>
<div class="c" style="left:920px;top:816px;width:188px;height:38px;">3.60</div>
<div class="c" style="left:1109px;top:817px;width:188px;height:38px;color:#1e84bf;font-weight:bold">待入库</div>
<div class="c" style="left:1298px;top:816px;width:188px;height:38px;">2022-11-17</div>
<div class="btn" style="left:1707px;top:825px;background:#009688">查看</div>
<div class="btn" style="left:1755px;top:825px;background:#ffb800">审核</div>
<div class="btn" style="left:1803px;top:825px;background:#1e9fff">导出</div>
<div class="a" style="left:299px;top:862px;line-height:26px;font-size:12px;color:#333">共 43 条</div>
<svg class="a" style="left:362px;top:868px" width="9" height="14" viewBox="0 0 9 14"><path d="M7.5 1L1.5 7l6 6" fill="none" stroke="#d2d2d2" stroke-width="1.3"/></svg>
<div class="a" style="left:385px;top:862px;width:31px;height:26px;line-height:26px;background:#009688;color:#fff;text-align:center;font-size:12px;border-radius:2px">1</div>
<div class="a" style="left:420px;top:862px;width:20px;line-height:26px;text-align:center;font-size:12px;color:#333">2</div>
<div class="a" style="left:450px;top:862px;width:20px;line-height:26px;text-align:center;font-size:12px;color:#333">3</div>
<svg class="a" style="left:489px;top:868px" width="9" height="14" viewBox="0 0 9 14"><path d="M1.5 1l6 6-6 6" fill="none" stroke="#333" stroke-width="1.3"/></svg>
<div class="a" style="left:513px;top:862px;line-height:26px;font-size:12px;color:#999">到第</div>
<div class="a" style="left:547px;top:858px;width:40px;height:32px;border:1px solid #e6e6e6;border-radius:2px;line-height:30px;text-align:center;font-size:12px;color:#999">1</div>
<div class="a" style="left:597px;top:862px;line-height:26px;font-size:12px;color:#999">页</div>
<div class="a" style="left:620px;top:862px;width:45px;height:26px;border:1px solid #e6e6e6;border-radius:2px;line-height:24px;text-align:center;font-size:12px;color:#999">确定</div>
<div class="a" style="left:0;top:913px;width:1871px;height:14px;background:#fff;border-top:1px solid #e3e3e3"></div>
<svg class="a" style="left:15px;top:923px" width="8" height="8" viewBox="0 0 8 8"><path d="M0.5 0.5l7 7M7.5 0.5l-7 7" stroke="#777" stroke-width="1"/></svg>
<div class="a" style="left:30px;top:923px;width:21px;height:10px;background:#22b14c;border-radius:1px;color:#fff;font-size:7px;line-height:10px;text-align:center;font-weight:bold">NEW</div>
<div class="a" style="left:56px;top:920px;line-height:14px;font-size:12px;color:#333;white-space:nowrap">全民挑战丨与360壁纸合拍赢大奖活动开始啦!</div>
<div class="a" style="left:1416px;top:922px;width:16px;height:12px;border:1.5px solid #22b14c;border-radius:2px"></div>
<svg class="a" style="left:1421px;top:923px" width="6" height="6" viewBox="0 0 6 6"><path d="M0 0l6 3-6 3z" fill="#22b14c"/></svg>
<div class="a" style="left:1436px;top:921px;line-height:14px;font-size:12px;color:#333">我的视频</div>
<svg class="a" style="left:1504px;top:920px" width="15" height="10" viewBox="0 0 15 10"><path d="M7.5 0.7L14 2.5V8M7.5 0.7L1 2.5V8" fill="none" stroke="#666" stroke-width="1.3"/><path d="M4 5h7" stroke="#666" stroke-width="1.3"/></svg>
<svg class="a" style="left:1538px;top:922px" width="14" height="8" viewBox="0 0 14 8"><path d="M0.7 8V1.5A0.8 0.8 0 0 1 1.5 0.7h11a0.8 0.8 0 0 1 0.8 0.8V8" fill="none" stroke="#666" stroke-width="1.3"/><circle cx="4" cy="4" r="1" fill="#666"/></svg>
<svg class="a" style="left:1572px;top:922px" width="16" height="8" viewBox="0 0 16 8"><path d="M8 3C6 0 1 0 1 4v4M8 3c2-3 7-3 7 1v4" fill="none" stroke="#666" stroke-width="1.3"/></svg>
<svg class="a" style="left:1607px;top:922px" width="14" height="8" viewBox="0 0 14 8"><path d="M1 8L8 3l5-2.5" fill="none" stroke="#666" stroke-width="1.6"/></svg>
<svg class="a" style="left:1643px;top:922px" width="12" height="8" viewBox="0 0 12 8"><path d="M6 0v8M1 5l2 3M11 5l-2 3" fill="none" stroke="#666" stroke-width="1.2"/></svg>
<div class="a" style="left:1661px;top:921px;line-height:14px;font-size:12px;color:#333">下载</div>
<svg class="a" style="left:1704px;top:922px" width="15" height="8" viewBox="0 0 15 8"><path d="M3 6V1h9v5M0.5 7.3h14" fill="none" stroke="#666" stroke-width="1.3"/></svg>
<svg class="a" style="left:1739px;top:921px" width="13" height="9" viewBox="0 0 13 9"><path d="M1 9C1 3 5 0.7 12 0.7 12 6 9 9 4 9" fill="none" stroke="#666" stroke-width="1.3"/></svg>
<svg class="a" style="left:1773px;top:922px" width="13" height="8" viewBox="0 0 13 8"><path d="M0.7 8V0.7h11.6V8M4 0.7V8" fill="none" stroke="#666" stroke-width="1.3"/></svg>
<svg class="a" style="left:1806px;top:922px" width="14" height="8" viewBox="0 0 14 8"><path d="M0.7 8V4L7 0.7V8M9.5 2c1 1 1 4 0 6M12 1c1.6 2 1.6 5 0 7" fill="none" stroke="#666" stroke-width="1.2"/></svg>
<svg class="a" style="left:1843px;top:922px" width="11" height="8" viewBox="0 0 11 8"><path d="M0.7 8A4.8 4.8 0 0 1 10.3 8" fill="none" stroke="#666" stroke-width="1.2"/></svg>
<div class="a" style="left:1859px;top:921px;line-height:14px;font-size:12px;color:#333">10</div>
</body></html>
